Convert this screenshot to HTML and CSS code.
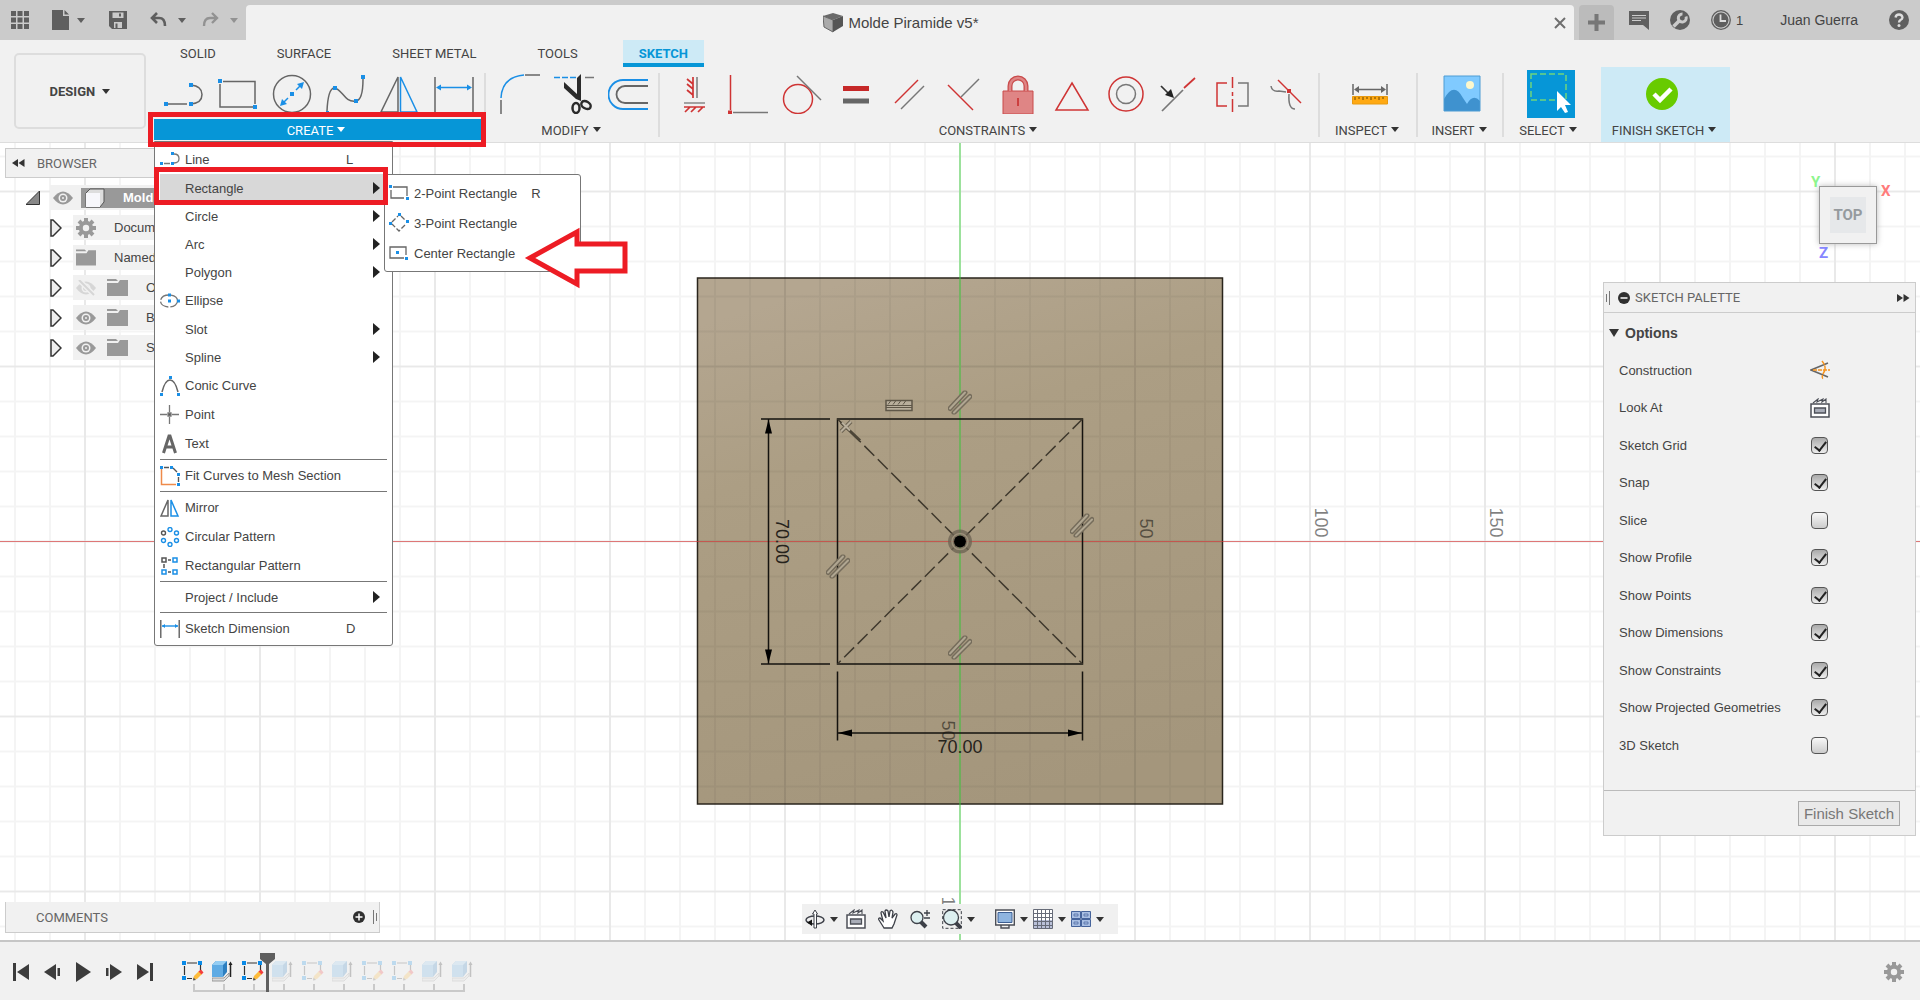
FILE: index.html
```html
<!DOCTYPE html>
<html lang="en">
<head>
  <meta charset="UTF-8" />
  <title>Molde Piramide v5*</title>
  <link rel="stylesheet" href="styles.css">
</head>
<body>
  <!-- shared icons -->
  <svg class="defs" width="0" height="0">
    <symbol id="eye" viewBox="0 0 20 14">
      <path d="M0 7Q10-6 20 7Q10 20 0 7Z" fill="#999"/>
      <circle cx="10" cy="7" r="4.5" fill="#f1f1f1"/><circle cx="10" cy="7" r="3" fill="#999"/><circle cx="10" cy="7" r="1" fill="#f1f1f1"/>
    </symbol>
    <symbol id="folder" viewBox="0 0 21 17">
      <path d="M0 0H9L11 2H0ZM0 4H11L13 1H21V17H0Z" fill="#999"/>
    </symbol>
    <symbol id="gear" viewBox="0 0 20 20">
      <circle cx="10" cy="10" r="5.2" fill="none" stroke="#999" stroke-width="4"/>
      <path d="M10 0V4M10 16V20M0 10H4M16 10H20M3 3L5.8 5.8M14.2 14.2L17 17M3 17L5.8 14.2M14.2 5.8L17 3" stroke="#999" stroke-width="4"/>
    </symbol>
    <symbol id="expand" viewBox="0 0 12 18">
      <path d="M1 1H3L11 9L3 17H1Z" fill="#eee" stroke="#333" stroke-width="1.5"/>
    </symbol>
    <symbol id="look" viewBox="0 0 20 20">
      <path d="M1 6H19V19H1Z" fill="#fff" stroke="#4c4f57" stroke-width="1.500"/>
      <path d="M4.500 10H15.500V15H4.500Z" fill="#a9adb8" stroke="#4c4f57" stroke-width="1.300"/>
      <path d="M3 5L8 1L7 4L13 1L12 4L16 1V5" fill="none" stroke="#4c4f57" stroke-width="1.100"/>
    </symbol>
    <symbol id="t-sketch" viewBox="0 0 22 22">
      <path d="M5 3H15M2.500 6V15M18.500 5V11M5 18.500H10" stroke="#333" stroke-width="1.200"/>
      <path d="M0 1H4V5H0ZM16 1H20V5H16ZM0 16H4V20H0Z" fill="#0a8ae6"/>
      <path d="M11 20L12 16L17 11L20 14L15 19Z" fill="#fdbb3b"/>
      <path d="M11 20.500L11.500 17.500L14 20Z" fill="#555"/>
      <path d="M16.500 11.500L19 9.500L21.500 12.500L19.500 14.500Z" fill="#f33d3d"/>
    </symbol>
    <symbol id="t-extrude" viewBox="0 0 22 22">
      <path d="M0 18V21H12L17 16V13L12 18Z" fill="#ddd" stroke="#888" stroke-width=".8"/>
      <path d="M0 5L4 1H15V12L11 17H0Z" fill="#2d7fc0"/>
      <path d="M0 5H11V17H0Z" fill="#5fabe4"/><path d="M0 5L4 1H15L11 5Z" fill="#94cdf3"/>
      <path d="M18.500 17V5" stroke="#222" stroke-width="1.500"/><path d="M16.500 5L18.500 1.500L20.500 5Z" fill="#222"/>
    </symbol>
    <symbol id="par" viewBox="-12 -12 24 24">
      <path d="M-10 6L5-10M-6 10L10-6" stroke="#756c5b" stroke-width="5" stroke-linecap="round"/>
      <path d="M-10 6L5-10M-6 10L10-6" stroke="#b0a691" stroke-width="2" stroke-linecap="round"/>
    </symbol>
  </svg>

  <header>
    <div class="topbar">
      <div class="quick">
        <button class="bare" aria-label="Data panel"><svg width="18" height="18" viewBox="0 0 18 18" fill="#5f5f5f"><path d="M0 0H5V5H0ZM6.500 0H11.500V5H6.500ZM13 0H18V5H13ZM0 6.500H5V11.500H0ZM6.500 6.500H11.500V11.500H6.500ZM13 6.500H18V11.500H13ZM0 13H5V18H0ZM6.500 13H11.500V18H6.500ZM13 13H18V18H13Z"/></svg></button>
        <button class="bare file" aria-label="File"><svg width="17" height="20" viewBox="0 0 17 20" fill="#5f5f5f"><path d="M0 0H11V6H17V20H0ZM12.500 0L17 4.500H12.500Z"/></svg><i class="caret"></i></button>
        <button class="bare save" aria-label="Save"><svg width="18" height="18" viewBox="0 0 18 18"><path d="M0 0H18V18H3L0 15Z" fill="#5f5f5f"/><path d="M3.500 1.500H14.500V7H3.500ZM5 11H13V17H5Z" fill="#cbcbcb"/><path d="M10 2.500H12V5.500H10ZM6.500 12.500H8.500V17H6.500Z" fill="#5f5f5f"/></svg></button>
        <button class="bare undo" aria-label="Undo"><svg width="17" height="16" viewBox="0 0 17 16" fill="none" stroke="#5f5f5f" stroke-width="2.600"><path d="M7 1L2 6L7 11M2 6H9Q15 6 15 14"/></svg><i class="caret"></i></button>
        <button class="bare redo" aria-label="Redo"><svg width="17" height="16" viewBox="0 0 17 16" fill="none" stroke="#929292" stroke-width="2.400"><path d="M10 1L15 6L10 11M15 6H8Q2 6 2 14"/></svg><i class="caret"></i></button>
      </div>
      <div class="doc-tab">
        <svg width="20" height="20" viewBox="0 0 20 20"><path d="M0 3L10 0L20 3L10 7Z" fill="#6a6a6a"/><path d="M0 3L10 7V19L1 14Z" fill="#aaa" stroke="#666"/><path d="M10 7L20 3V13L10 19Z" fill="#555"/></svg>
        <span>Molde Piramide v5*</span>
        <button class="bare close" aria-label="Close"><svg width="12" height="12" viewBox="0 0 12 12" stroke="#6f6f6f" stroke-width="2"><path d="M1 1L11 11M11 1L1 11"/></svg></button>
      </div>
      <button class="new-tab" aria-label="New tab"><svg width="17" height="17" viewBox="0 0 17 17" stroke="#777" stroke-width="4"><path d="M8.500 0V17M0 8.500H17"/></svg></button>
      <div class="account">
        <button class="bare" aria-label="Comments"><svg width="20" height="19" viewBox="0 0 20 19"><path d="M0 0H20V19L14 14H0Z" fill="#5f5f5f"/><path d="M3 4.500H17M3 7H17M3 9.500H12" stroke="#ccc" stroke-width="1.200"/></svg></button>
        <button class="bare" aria-label="Extensions"><svg width="20" height="20" viewBox="0 0 20 20"><circle cx="10" cy="10" r="10" fill="#5f5f5f"/><path d="M3.500 16.500L10 10" stroke="#cbcbcb" stroke-width="3.500"/><path d="M16 6.500A4 4 0 1 1 12.500 4" fill="none" stroke="#cbcbcb" stroke-width="3"/></svg></button>
        <button class="bare jobs"><svg width="20" height="20" viewBox="0 0 20 20"><circle cx="10" cy="10" r="9.300" fill="none" stroke="#5f5f5f" stroke-width="1.300"/><circle cx="10" cy="10" r="7.500" fill="#5f5f5f"/><path d="M9.500 4.500V11H15" fill="none" stroke="#ddd" stroke-width="1.800"/></svg>1</button>
        <button class="bare user">Juan Guerra</button>
        <button class="bare" aria-label="Help"><svg width="20" height="20" viewBox="0 0 20 20"><circle cx="10" cy="10" r="10" fill="#5f5f5f"/><path d="M6.500 7.500Q7 4.500 10 4.500T13.500 7.500Q13.500 9 11.500 10Q10 11 10 12.500" fill="none" stroke="#ddd" stroke-width="2.300"/><circle cx="10" cy="15.500" r="1.500" fill="#ddd"/></svg></button>
      </div>
    </div>

    <div class="ribbon">
      <button class="workspace">DESIGN <i class="caret"></i></button>
      <div class="ribbon-main">
        <nav class="tabs">
          <button>SOLID</button>
          <button>SURFACE</button>
          <button>SHEET METAL</button>
          <button>TOOLS</button>
          <button class="active">SKETCH</button>
        </nav>
        <div class="tools">
          <div class="group create">
            <div class="icons">
              <button aria-label="Line"><svg width="40" height="40" viewBox="0 0 40 40" fill="none"><path d="M3 30H23M27 30Q38 29 38 20.500T27 11" stroke="#666" stroke-width="1.500"/><path d="M0 28H4V32H0ZM25 28H29V32H25ZM25 9H29V13H25Z" fill="#1a8fe6"/></svg></button>
              <button aria-label="Rectangle"><svg width="40" height="40" viewBox="0 0 40 40" fill="none"><path d="M5 7.500H37V30M35 33H2V10" stroke="#666" stroke-width="1.500"/><path d="M0 5H4V9H0ZM35 31H39V35H35Z" fill="#1a8fe6"/></svg></button>
              <button aria-label="Circle"><svg width="40" height="40" viewBox="0 0 40 40" fill="none"><circle cx="20" cy="20" r="18.500" stroke="#666" stroke-width="1.500"/><path d="M12 28L16 24M24 16L28 12" stroke="#1a8fe6" stroke-width="1.500"/><path d="M8 32L10 25L15 30ZM32 8L30 15L25 10ZM18 18H22V22H18Z" fill="#1a8fe6"/></svg></button>
              <button aria-label="Spline"><svg width="40" height="40" viewBox="0 0 40 40" fill="none"><path d="M1 37Q2 15 8 14C16 14 18 29 30 27Q37 26 37 5" stroke="#666" stroke-width="1.500"/><path d="M-1 37H3V41H-1ZM7 12H11V16H7ZM28 25H32V29H28ZM35 1H39V5H35Z" fill="#1a8fe6"/></svg></button>
              <button aria-label="Mirror"><svg width="40" height="40" viewBox="0 0 40 40" fill="none"><path d="M18 3V38H1Z" stroke="#666" stroke-width="1.500"/><path d="M20.500 3V38H37Z" stroke="#1a8fe6" stroke-width="1.500"/></svg></button>
              <button aria-label="Sketch Dimension"><svg width="40" height="40" viewBox="0 0 40 40" fill="none"><path d="M1 3V38M39 3V38" stroke="#666" stroke-width="1.500"/><path d="M4 13.500H36" stroke="#1a8fe6" stroke-width="1.500"/><path d="M2 13.500L7 10.500V16.500ZM38 13.500L33 10.500V16.500Z" fill="#1a8fe6"/></svg></button>
            </div>
            <button class="group-label">CREATE <i class="caret"></i></button>
            <div class="callout callout-create"></div>

            <ul class="menu">
              <li><button><svg width="20" height="20" viewBox="0 0 20 20" fill="none"><path d="M4 13.500H10M14 4Q19 4 19 8.500T14 13" stroke="#777" stroke-width="1.300"/><path d="M0 12H3V15H0ZM11 12H14V15H11ZM11 2H14V5H11Z" fill="#1a8fe6"/></svg><span>Line</span><kbd>L</kbd></button></li>
              <li class="open"><button class="plain"><span>Rectangle</span><i class="more"></i></button>
                <ul class="submenu">
                  <li><button><svg width="20" height="20" viewBox="0 0 20 20" fill="none"><path d="M4 4H18V13M15 15H2V7" stroke="#666" stroke-width="1.300"/><path d="M0 2H3V5H0ZM17 14H20V17H17Z" fill="#1a8fe6"/></svg><span>2-Point Rectangle</span><kbd>R</kbd></button></li>
                  <li><button><svg width="20" height="20" viewBox="0 0 20 20" fill="none"><path d="M3 9L9 3M12 3L17 8M16 12L10 18L3 11" stroke="#666" stroke-width="1.300" stroke-dasharray="5 2"/><path d="M0 9H3V12H0ZM9 0H12V3H9ZM17 7H20V10H17Z" fill="#1a8fe6"/></svg><span>3-Point Rectangle</span></button></li>
                  <li><button><svg width="20" height="20" viewBox="0 0 20 20" fill="none"><path d="M17 12V4H1V15H15" stroke="#666" stroke-width="1.300"/><path d="M7 8H10V11H7ZM16 14H19V17H16Z" fill="#1a8fe6"/></svg><span>Center Rectangle</span></button></li>
                </ul>
                <div class="callout callout-item"></div>
                <svg class="arrow" width="104" height="62" viewBox="0 0 104 62"><path d="M6 31L53 5V17H101V44H53V57Z" fill="#fff" stroke="#ed1c24" stroke-width="5"/></svg>
              </li>
              <li><button class="plain"><span>Circle</span><i class="more"></i></button></li>
              <li><button class="plain"><span>Arc</span><i class="more"></i></button></li>
              <li><button class="plain"><span>Polygon</span><i class="more"></i></button></li>
              <li><button><svg width="20" height="20" viewBox="0 0 20 20" fill="none"><ellipse cx="9" cy="10" rx="8.500" ry="6" stroke="#777" stroke-width="1.300" stroke-dasharray="10 2"/><path d="M8 2.500H11V5.500H8ZM8 8.500H11V11.500H8ZM17 8.500H20V11.500H17Z" fill="#1a8fe6"/></svg><span>Ellipse</span></button></li>
              <li><button class="plain"><span>Slot</span><i class="more"></i></button></li>
              <li><button class="plain"><span>Spline</span><i class="more"></i></button></li>
              <li><button><svg width="20" height="20" viewBox="0 0 20 20" fill="none"><path d="M2 16Q5 4 10 4T18 16" stroke="#666" stroke-width="1.500"/><path d="M9 0H12V3H9ZM0 17H3V20H0ZM17 17H20V20H17Z" fill="#1a8fe6"/></svg><span>Conic Curve</span></button></li>
              <li><button><svg width="20" height="20" viewBox="0 0 20 20" stroke="#777" stroke-width="1.300"><path d="M9.500 0V7M9.500 12V19M0 9.500H7M12 9.500H19"/><path d="M8 8H11V11H8Z" fill="#555"/></svg><span>Point</span></button></li>
              <li><button><svg width="20" height="20" viewBox="0 0 20 20" fill="none" stroke="#666" stroke-width="3"><path d="M3.500 19L9 2H10L15.500 19M6 13H13"/></svg><span>Text</span></button></li>
              <li class="sep"></li>
              <li><button><svg width="20" height="20" viewBox="0 0 20 20" fill="none"><path d="M1.500 3V18.500H16" stroke="#ee8a4a" stroke-width="1.500"/><path d="M4 1.500H9M13 2L17 6M18.500 11V16" stroke="#555" stroke-width="1.400"/><path d="M0 0H3V3H0ZM10 0H13V3H10ZM17 7H20V10H17ZM17 17H20V20H17Z" fill="#1a8fe6"/></svg><span>Fit Curves to Mesh Section</span></button></li>
              <li class="sep"></li>
              <li><button><svg width="20" height="20" viewBox="0 0 20 20" fill="none" stroke-width="1.500"><path d="M8 2V18H1Z" stroke="#666"/><path d="M11 2V18H18Z" stroke="#1a8fe6"/></svg><span>Mirror</span></button></li>
              <li><button><svg width="20" height="20" viewBox="0 0 20 20" fill="none" stroke="#1a8fe6" stroke-width="1.400"><circle cx="10" cy="2.500" r="2"/><circle cx="16.500" cy="6" r="2"/><circle cx="16.500" cy="13.500" r="2"/><circle cx="10" cy="17.500" r="2"/><circle cx="3.500" cy="13.500" r="2"/><circle cx="3.500" cy="6" r="2" stroke="#555"/></svg><span>Circular Pattern</span></button></li>
              <li><button><svg width="20" height="20" viewBox="0 0 20 20" fill="none" stroke="#1a8fe6" stroke-width="1.500"><path d="M13 2H17V6H13ZM13 14H17V18H13ZM2 14H6V18H2Z"/><path d="M2 2H6V6H2ZM8 4H11M4 8V12M8 16H11" stroke="#555"/></svg><span>Rectangular Pattern</span></button></li>
              <li class="sep"></li>
              <li><button class="plain"><span>Project / Include</span><i class="more"></i></button></li>
              <li class="sep"></li>
              <li><button><svg width="20" height="20" viewBox="0 0 20 20" fill="none"><path d="M.8 1V19M19.200 1V19" stroke="#555" stroke-width="1.300"/><path d="M2 7H18" stroke="#1a8fe6" stroke-width="1.400"/><path d="M2 7L5 5V9ZM18 7L15 5V9Z" fill="#1a8fe6"/></svg><span>Sketch Dimension</span><kbd>D</kbd></button></li>
            </ul>
          </div>
          <div class="divider"></div>
          <div class="group">
            <div class="icons">
              <button aria-label="Fillet"><svg width="40" height="40" viewBox="0 0 40 40" fill="none" stroke-width="1.500"><path d="M1 24Q2 3 24 1" stroke="#1a8fe6"/><path d="M25 1H40M1 26V40" stroke="#666"/></svg></button>
              <button aria-label="Trim"><svg width="40" height="40" viewBox="0 0 40 40" fill="none"><path d="M0 3.500H22" stroke="#1a8fe6" stroke-width="1.500" stroke-dasharray="6 2"/><path d="M31 3.500H40" stroke="#777" stroke-width="1.500"/><path d="M23 4L27 0V27L22 25L10 14V8L23 20Z" fill="#2b2b2b"/><ellipse cx="22" cy="34" rx="3.500" ry="5" stroke="#2b2b2b" stroke-width="2.500"/><ellipse cx="32" cy="31" rx="5" ry="3.500" stroke="#2b2b2b" stroke-width="2.500" transform="rotate(30 32 31)"/></svg></button>
              <button aria-label="Offset"><svg width="40" height="40" viewBox="0 0 40 40" fill="none"><path d="M40 6H15A14.500 14.500 0 0 0 15 35H40" stroke="#1a8fe6" stroke-width="1.800"/><path d="M40 12H17A8.500 8.500 0 0 0 17 29H40" stroke="#666" stroke-width="1.800"/></svg></button>
            </div>
            <button class="group-label">MODIFY <i class="caret"></i></button>
          </div>
          <div class="divider"></div>
          <div class="group">
            <div class="icons">
              <button aria-label="Horizontal/Vertical"><svg width="40" height="40" viewBox="0 0 40 40" fill="none" stroke-width="1.700"><path d="M19 3V24M13 5L19 10M13 10L19 15M13 16L19 21M10 33H31M11 38L16 33M17 38L22 33M24 38L29 33" stroke="#cf3434"/><path d="M23 3V24M10 29H31" stroke="#888"/></svg></button>
              <button aria-label="Coincident"><svg width="40" height="40" viewBox="0 0 40 40" fill="none" stroke-width="1.500"><path d="M2.500 1V36" stroke="#cf3434"/><path d="M5 38.500H40" stroke="#777"/><path d="M0 36.500H4V40.500H0Z" fill="#cf3434"/></svg></button>
              <button aria-label="Tangent"><svg width="40" height="40" viewBox="0 0 40 40" fill="none" stroke-width="1.500"><circle cx="16" cy="25" r="14.500" stroke="#cf3434"/><path d="M15 2L39 26" stroke="#777"/></svg></button>
              <button aria-label="Equal"><svg width="40" height="40" viewBox="0 0 40 40"><path d="M7 12H33V17H7Z" fill="#c62828"/><path d="M7 24.500H33V29.500H7Z" fill="#666"/></svg></button>
              <button aria-label="Parallel"><svg width="40" height="40" viewBox="0 0 40 40" stroke-width="1.500"><path d="M5 29L28 6" stroke="#cf3434"/><path d="M11 35L34 12" stroke="#777"/></svg></button>
              <button aria-label="Perpendicular"><svg width="40" height="40" viewBox="0 0 40 40" stroke-width="1.500"><path d="M4 11L29 36" stroke="#cf3434"/><path d="M17 23L35 5" stroke="#777"/></svg></button>
              <button aria-label="Fix"><svg width="40" height="40" viewBox="0 0 40 40"><path d="M5 17H35V40H5Z" fill="#df8585" stroke="#c94b4b"/><path d="M12 17V12A8 8 0 0 1 28 12V17" fill="none" stroke="#c94b4b" stroke-width="5"/><path d="M12 17V12A8 8 0 0 1 28 12V17" fill="none" stroke="#df8585" stroke-width="2.500"/><path d="M20 24V32" stroke="#c62828" stroke-width="1.500"/></svg></button>
              <button aria-label="Midpoint"><svg width="40" height="40" viewBox="0 0 40 40" fill="none"><path d="M20 9L36 36H4Z" stroke="#cf3434" stroke-width="1.500"/></svg></button>
              <button aria-label="Concentric"><svg width="40" height="40" viewBox="0 0 40 40" fill="none" stroke-width="1.500"><circle cx="20" cy="20" r="17" stroke="#cf3434"/><circle cx="20" cy="20" r="9.500" stroke="#777"/></svg></button>
              <button aria-label="Collinear"><svg width="40" height="40" viewBox="0 0 40 40" stroke-width="1.700"><path d="M2 37L23 16" stroke="#777"/><path d="M24 14L35 4" stroke="#cf3434"/><path d="M1 12L10 21" stroke="#333"/><path d="M5 21L14 24L11 15Z" fill="#222"/></svg></button>
              <button aria-label="Symmetry"><svg width="40" height="40" viewBox="0 0 40 40" fill="none" stroke-width="1.500"><path d="M13 9H3V32H13M18.500 3V14M18.500 18V22M18.500 25V38" stroke="#cf3434"/><path d="M24 9H34V32H24" stroke="#777"/></svg></button>
              <button aria-label="Curvature"><svg width="40" height="40" viewBox="0 0 40 40" fill="none" stroke-width="1.500"><path d="M3 12Q4 18 11 17L18 18M21 20Q20 35 27 35" stroke="#777"/><path d="M10 6L33 29" stroke="#cf3434"/><path d="M19 15H23V19H19Z" fill="#cf3434"/></svg></button>
            </div>
            <button class="group-label">CONSTRAINTS <i class="caret"></i></button>
          </div>
          <div class="divider"></div>
          <div class="group inspect">
            <div class="icons"><button aria-label="Measure"><svg width="40" height="40" viewBox="0 0 40 40"><path d="M3 10V21M37 10V21M6 15.500H34" stroke="#666" stroke-width="1.500"/><path d="M4 15.500L9 12V19ZM36 15.500L31 12V19Z" fill="#666"/><path d="M2.500 22.500H37.500V30H2.500Z" fill="#ffa912" stroke="#e89a10"/><path d="M5 23V26M9 23V25M13 23V26M17 23V25M21 23V26M25 23V25M29 23V26M33 23V25" stroke="#6b4700"/></svg></button></div>
            <button class="group-label">INSPECT <i class="caret"></i></button>
          </div>
          <div class="divider"></div>
          <div class="group insert">
            <div class="icons"><button aria-label="Insert image"><svg width="40" height="40" viewBox="0 0 40 40"><path d="M2 2H38V37H2Z" fill="#80caff"/><path d="M2 25Q12 7 21 24L25 30Q31 19 38 27V37H2Z" fill="#3f92cf"/><circle cx="28" cy="11" r="4" fill="#fdf8cc"/><path d="M2 2H38V37H2Z" fill="none" stroke="#4c9cd4"/></svg></button></div>
            <button class="group-label">INSERT <i class="caret"></i></button>
          </div>
          <div class="divider"></div>
          <div class="group select">
            <div class="icons"><button aria-label="Select"><svg width="48" height="48" viewBox="0 0 48 48"><path d="M0 0H48V48H0Z" fill="#0696d7"/><path d="M4 4H39V30H4Z" fill="none" stroke="#6fd57d" stroke-width="1.500" stroke-dasharray="6 3"/><path d="M30 21V41L34 37L38 43L41 42L38 35L44 35Z" fill="#fff"/></svg></button></div>
            <button class="group-label">SELECT <i class="caret"></i></button>
          </div>
          <button class="finish">
            <svg width="32" height="32" viewBox="0 0 32 32"><circle cx="16" cy="16" r="16" fill="#68cb00"/><path d="M8 16L14 22L25 11" fill="none" stroke="#fff" stroke-width="4.500"/></svg>
            <span class="group-label">FINISH SKETCH <i class="caret"></i></span>
          </button>
        </div>
      </div>
    </div>
  </header>

  <main>
    <svg class="stage" width="100%" height="100%">
      <defs>
        <pattern id="minor" width="35" height="35" patternUnits="userSpaceOnUse"><path d="M0 0H35V35H0Z" fill="none" stroke="#000" stroke-opacity=".045" stroke-width="2"/></pattern>
        <pattern id="major" width="175" height="175" patternUnits="userSpaceOnUse"><path d="M0 0H175V175H0Z" fill="none" stroke="#000" stroke-opacity=".045" stroke-width="2"/></pattern>
        <linearGradient id="wood" x1=".3" y1="0" x2=".6" y2="1"><stop offset="0" stop-color="#b4a690"/><stop offset=".3" stop-color="#ac9e84"/><stop offset="1" stop-color="#a4967c"/></linearGradient>
      </defs>
      <!-- origin of the sketch is the middle of the canvas -->
      <svg x="50%" y="50%" overflow="visible">
        <rect x="-262.500" y="-263.500" width="525" height="526" fill="url(#wood)" stroke="#2a251c" stroke-width="1.500"/>
        <rect x="-2100" y="-2100" width="4200" height="4200" fill="url(#minor)"/>
        <rect x="-2100" y="-2100" width="4200" height="4200" fill="url(#major)"/>
        <path d="M-2100 0H2100" stroke="#d93a3a" stroke-opacity=".65" stroke-width="1"/>
        <path d="M0-2100V2100" stroke="#3fd63f" stroke-opacity=".45" stroke-width="2"/>
        <g class="axis-text">
          <text transform="translate(180 -13) rotate(90)">50</text>
          <text transform="translate(355 -19) rotate(90)">100</text>
          <text transform="translate(530 -19) rotate(90)">150</text>
          <text transform="translate(-18 189) rotate(90)">50</text>
          <text transform="translate(-18 370) rotate(90)">100</text>
        </g>
        <g fill="none" stroke="#15130f" stroke-width="1.500">
          <path d="M-122.500-122.500H122.500V122.500H-122.500Z"/>
          <path d="M-122.500-122.500L122.500 122.500M122.500-122.500L-122.500 122.500" stroke="#3f392d" stroke-dasharray="14 5"/>
          <path d="M-199-122.500H-130M-199 122.500H-130M-191.500-122V122M-122.500 130V199M122.500 130V199M-122 191.500H122"/>
        </g>
        <path d="M-191.500-122L-195-108H-188ZM-191.500 122L-195 108H-188ZM-122 191.500L-108 188V195ZM122 191.500L108 188V195Z" fill="#000"/>
        <g class="dim-text">
          <text transform="translate(-184 0) rotate(90)">70.00</text>
          <text x="0" y="211">70.00</text>
        </g>
        <use href="#par" x="-12" y="-151" width="24" height="24"/>
        <use href="#par" x="-12" y="94" width="24" height="24"/>
        <use href="#par" x="110" y="-28" width="24" height="24"/>
        <use href="#par" x="-134" y="13" width="24" height="24"/>
        <path d="M-74-141H-48V-131H-74Z" fill="#b9af9c" stroke="#5f5748" stroke-width="1.500"/>
        <path d="M-74-136H-48M-74-134H-48M-72-137L-69-141M-67-137L-64-141M-62-137L-59-141M-57-137L-54-141" stroke="#5f5748"/>
        <path d="M-119-119L-100-101" stroke="#4d4638" stroke-width="3"/>
        <path d="M-119-110L-109-120" stroke="#6b6252" stroke-width="4"/><path d="M-119-110L-109-120M-118-119L-110-111" stroke="#b9af9c" stroke-width="2"/>
        <circle r="9" fill="none" stroke="#6b6252" stroke-opacity=".75" stroke-width="6"/><circle r="8" fill="none" stroke="#9c907a" stroke-width="1.500"/>
        <circle r="6" fill="#000"/>
      </svg>
    </svg>

    <aside class="browser">
      <h2><svg width="13" height="8" viewBox="0 0 13 8" fill="#333"><path d="M6 0V8L0 4ZM12.500 0V8L6.500 4Z"/></svg>BROWSER</h2>
      <ul>
        <li class="root"><svg width="14" height="14" viewBox="0 0 14 14"><path d="M13.500 0V13.500H0Z" fill="#888" stroke="#333"/></svg>
          <div class="node"><svg width="20" height="14"><use href="#eye"/></svg><div class="chip"><svg width="20" height="20" viewBox="0 0 20 20" stroke="#555"><path d="M1 5L5 1H19V14L15 19H1Z" fill="#ddd"/><path d="M1 5H15V19H1Z" fill="#f7f7fb" stroke="none"/></svg><b>Mold</b></div></div></li>
        <li><svg width="12" height="18"><use href="#expand"/></svg><div class="node"><svg width="20" height="20"><use href="#gear"/></svg><span>Docum</span></div></li>
        <li><svg width="12" height="18"><use href="#expand"/></svg><div class="node"><svg width="20" height="17"><use href="#folder"/></svg><span>Named</span></div></li>
        <li><svg width="12" height="18"><use href="#expand"/></svg><div class="node deep"><svg class="off" width="20" height="16" viewBox="0 0 20 16"><use href="#eye" y="1" width="20" height="14"/><path d="M3 0L18 15" stroke="#f1f1f1" stroke-width="5"/><path d="M3 0L18 15" stroke="#999" stroke-width="2"/></svg><svg width="21" height="17"><use href="#folder"/></svg><span>O</span></div></li>
        <li><svg width="12" height="18"><use href="#expand"/></svg><div class="node deep"><svg width="20" height="14"><use href="#eye"/></svg><svg width="21" height="17"><use href="#folder"/></svg><span>B</span></div></li>
        <li><svg width="12" height="18"><use href="#expand"/></svg><div class="node deep"><svg width="20" height="14"><use href="#eye"/></svg><svg width="21" height="17"><use href="#folder"/></svg><span>S</span></div></li>
      </ul>
    </aside>

    <div class="viewcube">
      <span class="ax y">Y</span><span class="ax x">X</span><span class="ax z">Z</span>
      <button>TOP</button>
    </div>

    <aside class="palette">
      <h2><svg width="5" height="14" viewBox="0 0 5 14" stroke="#777"><path d="M1.500 3V11M4.500 0V14"/></svg><svg class="minus" width="12" height="12" viewBox="0 0 12 12"><circle cx="6" cy="6" r="6" fill="#2f2f2f"/><path d="M2.500 6H9.500" stroke="#fff" stroke-width="1.500"/></svg>SKETCH PALETTE<svg class="fwd" width="13" height="8" viewBox="0 0 13 8" fill="#333"><path d="M0 0V8L6 4ZM6.500 0V8L12.500 4Z"/></svg></h2>
      <h3><i class="caret"></i>Options</h3>
      <ul>
        <li><label for="construction">Construction</label><button id="construction" class="bare"><svg width="20" height="20" viewBox="0 0 20 20" fill="none" stroke-width="1.500"><path d="M18 3L1 10L18 17" stroke="#666"/><path d="M3 10H20M12 1Q17 7 14 12T13 19" stroke="#f7941e" stroke-dasharray="4 1"/></svg></button></li>
        <li><label for="lookat">Look At</label><button id="lookat" class="bare"><svg width="20" height="20"><use href="#look"/></svg></button></li>
        <li><label for="grid">Sketch Grid</label><input type="checkbox" id="grid" checked></li>
        <li><label for="snap">Snap</label><input type="checkbox" id="snap" checked></li>
        <li><label for="slice">Slice</label><input type="checkbox" id="slice"></li>
        <li><label for="profile">Show Profile</label><input type="checkbox" id="profile" checked></li>
        <li><label for="points">Show Points</label><input type="checkbox" id="points" checked></li>
        <li><label for="dimensions">Show Dimensions</label><input type="checkbox" id="dimensions" checked></li>
        <li><label for="constraints">Show Constraints</label><input type="checkbox" id="constraints" checked></li>
        <li><label for="projected">Show Projected Geometries</label><input type="checkbox" id="projected" checked></li>
        <li><label for="sketch3d">3D Sketch</label><input type="checkbox" id="sketch3d"></li>
      </ul>
      <footer><button>Finish Sketch</button></footer>
    </aside>

    <div class="comments">
      <span>COMMENTS</span>
      <button class="bare" aria-label="Add comment"><svg width="12" height="12" viewBox="0 0 12 12"><circle cx="6" cy="6" r="6" fill="#2f2f2f"/><path d="M2.500 6H9.500M6 2.500V9.500" stroke="#fff" stroke-width="1.500"/></svg></button>
      <svg width="5" height="14" viewBox="0 0 5 14" stroke="#777"><path d="M.5 0V14M3.500 3V11"/></svg>
    </div>

    <div class="navbar">
      <button class="bare drop" aria-label="Orbit"><svg width="20" height="20" viewBox="0 0 20 20" fill="none" stroke="#3d4048" stroke-width="1.500"><ellipse cx="10" cy="11" rx="9" ry="4"/><path d="M10 1L12.500 5H11.500V19H9V5H7.500Z" fill="#fff" stroke-width="1"/><path d="M2 13.500L7 10.500V17Z" fill="#111" stroke="none"/></svg><i class="caret"></i></button>
      <button class="bare" aria-label="Look At"><svg width="20" height="20"><use href="#look"/></svg></button>
      <button class="bare" aria-label="Pan"><svg width="20" height="20" viewBox="0 0 20 20"><path d="M6 19L1 11Q0 9 2 9L5 12L3 4Q3 2 5 3L8 9L7 2Q8 0 10 2L11 8L12 2Q14 0 15 3L14 9L17 5Q19 4 19 6L16 15L14 19Z" fill="#fff" stroke="#3d4048" stroke-width="1.300"/></svg></button>
      <button class="bare" aria-label="Zoom"><svg width="20" height="20" viewBox="0 0 20 20" stroke="#3d4048"><path d="M10 12L16 18" stroke-width="4"/><circle cx="7" cy="8.500" r="6" fill="#dceff0" stroke-width="1.300"/><path d="M14 4H20M17 1V7M14 9H20" stroke-width="1.300"/></svg></button>
      <button class="bare drop" aria-label="Fit"><svg width="20" height="20" viewBox="0 0 20 20" stroke="#3d4048"><path d="M.7.7H19.300V19.300H.7Z" fill="none" stroke-dasharray="3 2"/><path d="M13 13L19 19" stroke-width="4"/><circle cx="9" cy="8.500" r="7.500" fill="#dceff0" stroke-width="1.300"/></svg><i class="caret"></i></button>
      <button class="bare drop first" aria-label="Display"><svg width="20" height="20" viewBox="0 0 20 20"><path d="M.7 1H19.300V16H.7Z" fill="#fff" stroke="#4c4f57" stroke-width="1.400"/><path d="M3 3.500H17V13.500H3Z" fill="#8fb5e0" stroke="#3d5f93"/><path d="M6 16V19H14V16" fill="none" stroke="#4c4f57" stroke-width="1.400"/></svg><i class="caret"></i></button>
      <button class="bare drop" aria-label="Grid"><svg width="20" height="20" viewBox="0 0 20 20"><path d="M.5.5H19.500V19.500H.5Z" fill="#fff"/><path d="M.5 11H19.500V19.500H.5Z" fill="#b9c0d8"/><path d="M.5.5H19.500V19.500H.5ZM4.500 0V20M8.500 0V20M12.500 0V20M16.500 0V20M0 4.500H20M0 8.500H20M0 12.500H20M0 16.500H20" fill="none" stroke="#666b78"/></svg><i class="caret"></i></button>
      <button class="bare drop" aria-label="Viewports"><svg width="20" height="20" viewBox="0 0 20 20" fill="#a9bfe3" stroke="#45639b"><path d="M.5 2.500H9.500V9.500H.5ZM10.500 2.500H19.500V9.500H10.500ZM.5 10.500H9.500V17.500H.5ZM10.500 10.500H19.500V17.500H10.500Z"/><path d="M3 5H7V7H3ZM13 5H17V7H13ZM3 13H7V15H3ZM13 13H17V15H13Z" stroke-width=".7"/></svg><i class="caret"></i></button>
    </div>
  </main>

  <footer class="timeline">
    <div class="playback">
      <button class="bare" aria-label="Start"><svg width="16" height="18" viewBox="0 0 16 18" fill="#3c3c3c"><path d="M0 0H3V18H0ZM16 1V17L4 9Z"/></svg></button>
      <button class="bare" aria-label="Step back"><svg width="16" height="18" viewBox="0 0 16 18" fill="#3c3c3c"><path d="M12 1V17L0 9ZM13.500 5H16V13H13.500Z"/></svg></button>
      <button class="bare" aria-label="Play"><svg width="16" height="20" viewBox="0 0 16 20" fill="#3c3c3c"><path d="M1 0V20L16 10Z"/></svg></button>
      <button class="bare" aria-label="Step forward"><svg width="16" height="18" viewBox="0 0 16 18" fill="#3c3c3c"><path d="M4 1V17L16 9ZM0 5H2.500V13H0Z"/></svg></button>
      <button class="bare" aria-label="End"><svg width="16" height="18" viewBox="0 0 16 18" fill="#3c3c3c"><path d="M13 0H16V18H13ZM0 1V17L12 9Z"/></svg></button>
    </div>
    <ol class="features">
      <li><svg width="22" height="22"><use href="#t-sketch"/></svg></li>
      <li><svg width="22" height="22"><use href="#t-extrude"/></svg></li>
      <li class="current"><svg width="22" height="22"><use href="#t-sketch"/></svg><svg class="marker" width="15" height="39" viewBox="0 0 15 39"><path d="M0 0H15V6L9 11V39H6V11L0 6Z" fill="#5f5f5f"/></svg></li>
      <li class="later"><svg width="22" height="22"><use href="#t-extrude"/></svg></li>
      <li class="later"><svg width="22" height="22"><use href="#t-sketch"/></svg></li>
      <li class="later"><svg width="22" height="22"><use href="#t-extrude"/></svg></li>
      <li class="later"><svg width="22" height="22"><use href="#t-sketch"/></svg></li>
      <li class="later"><svg width="22" height="22"><use href="#t-sketch"/></svg></li>
      <li class="later"><svg width="22" height="22"><use href="#t-extrude"/></svg></li>
      <li class="later"><svg width="22" height="22"><use href="#t-extrude"/></svg></li>
    </ol>
    <button class="bare settings" aria-label="Settings"><svg width="20" height="20"><use href="#gear"/></svg></button>
  </footer>
</body>
</html>
```
FILE: styles.css
```css
* {
  box-sizing: border-box;
}
body {
  margin: 0;
  height: 100vh;
  display: flex;
  flex-direction: column;
  overflow: hidden;
  font-family: "Liberation Sans", Arial, sans-serif;
  font-size: 13px;
  color: #444;
  background: #fff;
}
ul, ol {
  list-style: none;
  margin: 0;
  padding: 0;
}
h2, h3 {
  margin: 0;
  font-size: 13px;
  font-weight: normal;
}
button {
  font: inherit;
  color: inherit;
  background: none;
  border: 0;
  padding: 0;
}
svg {
  display: block;
  flex: none;
}
.defs {
  position: absolute;
}
.bare {
  display: flex;
  align-items: center;
}
.caret {
  display: inline-block;
  border: 4px solid transparent;
  border-top: 5px solid #333;
  border-bottom: 0;
}

/* top bar */
header {
  position: relative;
  z-index: 2;
  background: #f1f1f1;
  border-bottom: 1px solid #ddd;
}
.topbar {
  display: flex;
  height: 40px;
  background: #cbcbcb;
}
.quick {
  display: flex;
  align-items: center;
  width: 246px;
  padding-left: 11px;
}
.quick .caret {
  border-top-color: #5f5f5f;
  margin-left: 8px;
}
.quick .file {
  margin-left: 23px;
}
.quick .save {
  margin-left: 24px;
}
.quick .undo {
  margin-left: 23px;
}
.quick .undo .caret,
.quick .redo .caret {
  margin-left: 11px;
}
.quick .redo {
  margin-left: 16px;
}
.quick .redo .caret {
  border-top-color: #929292;
}
.doc-tab {
  position: relative;
  flex: 1;
  display: flex;
  align-items: center;
  justify-content: center;
  gap: 5px;
  margin-top: 5px;
  padding-right: 18px;
  font-size: 15px;
  background: #f1f1f1;
  border-radius: 4px 4px 0 0;
}
.doc-tab .close {
  position: absolute;
  right: 8px;
}
.new-tab {
  display: flex;
  align-items: center;
  justify-content: center;
  width: 35px;
  margin: 5px 0 0 5px;
  background: #bbb;
  border-radius: 4px 4px 0 0;
}
.account {
  display: flex;
  align-items: center;
  gap: 21px;
  padding: 0 11px 0 15px;
}
.jobs {
  gap: 5px;
}
.user {
  margin: 0 10px 0 16px;
  font-size: 14px;
}

/* ribbon */
.ribbon {
  display: flex;
  font-family: Roboto, sans-serif;
}
.workspace {
  width: 132px;
  height: 76px;
  margin: 13px 4px 0 14px;
  border: 2px solid #ddd;
  border-radius: 5px;
  font-weight: bold;
}
.workspace .caret {
  margin: 0 0 2px 4px;
}
.ribbon-main {
  flex: 1;
}
.tabs {
  display: flex;
  gap: 29px;
  padding-left: 14px;
}
.tabs button {
  height: 27px;
  padding: 0 16px;
}
.tabs .active {
  color: #0696d7;
  font-weight: bold;
  background: #cdeaf6;
  box-shadow: inset 0 -4px #0696d7;
}
.tools {
  display: flex;
  height: 75px;
}
.group {
  position: relative;
  padding: 3px 3px 0 4px;
}
.icons {
  display: flex;
  justify-content: center;
  padding-left: 3px;
  margin-bottom: 1px;
}
.icons button {
  display: flex;
  align-items: center;
  justify-content: center;
  width: 54px;
  height: 48px;
}
.group-label {
  display: flex;
  align-items: center;
  justify-content: center;
  gap: 4px;
  width: 100%;
  height: 21px;
  padding: 2px 3px 0 0;
}
.group-label .caret {
  margin-bottom: 3px;
}
.create .group-label {
  color: #fff;
  background: #0696d7;
}
.create .caret {
  border-top-color: #fff;
}
.divider {
  width: 2px;
  margin: 6px 0 5px;
  background: #ddd;
}
.inspect {
  width: 96px;
}
.insert {
  width: 84px;
}
.select {
  width: 90px;
}
.finish {
  width: 129px;
  margin-left: 7px;
  padding-top: 9px;
  background: #cdeaf6;
}
.finish svg {
  margin: 0 auto 9px;
  position: relative;
  left: -4px;
}

/* create menu */
.menu {
  position: absolute;
  top: 74px;
  left: 4px;
  width: 239px;
  padding: 3px 5px 2px;
  background: #fff;
  border: 1px solid #777;
  border-radius: 0 0 3px 3px;
  font-family: "Liberation Sans", Arial, sans-serif;
}
.menu li button {
  display: flex;
  align-items: center;
  gap: 5px;
  width: 100%;
  height: 29px;
  text-align: left;
}
.menu li .plain {
  height: 28px;
  padding-left: 25px;
}
.menu span {
  flex: 1;
}
.menu kbd {
  width: 41px;
  font: inherit;
}
.more {
  margin-right: 7px;
  border: 6px solid transparent;
  border-left: 7px solid #222;
  border-right: 0;
}
.menu .sep {
  height: 1px;
  margin: 1px 0;
  background: #777;
}
.open {
  position: relative;
}
.open > button {
  background: #d8d8d8;
}
.submenu {
  position: absolute;
  top: 0;
  left: 224px;
  width: 197px;
  padding: 3px 4px;
  background: #fff;
  border: 1px solid #777;
  border-radius: 3px;
}
.menu .submenu button {
  height: 30px;
}
.submenu span {
  flex: none;
}
.submenu kbd {
  margin-left: 9px;
}

/* red marks */
.callout {
  position: absolute;
  border: 5px solid #ed1c24;
}
.callout-create {
  z-index: 1;
  top: 45px;
  left: -2px;
  width: 338px;
  height: 35px;
}
.callout-item {
  top: -7px;
  left: -6px;
  width: 234px;
  height: 38px;
}
.arrow {
  position: absolute;
  top: 53px;
  left: 364px;
}

/* canvas */
main {
  position: relative;
  flex: 1;
  min-height: 0;
}
.stage {
  position: absolute;
  top: 0;
  left: 0;
}
.axis-text, .dim-text {
  font-size: 18px;
  text-anchor: middle;
}
.axis-text {
  fill: #000;
  fill-opacity: 0.5;
}
.dim-text {
  fill: #26231c;
}

.browser {
  position: absolute;
  top: 5px;
  left: 5px;
  width: 150px;
  overflow: hidden;
}
.browser h2, .palette h2 {
  display: flex;
  align-items: center;
  height: 30px;
  font-family: Roboto, sans-serif;
  font-size: 13px;
  color: #666;
  background: #f1f1f1;
  border: 1px solid #ccc;
}
.browser h2 {
  gap: 12px;
  padding-left: 6px;
}
.browser ul {
  display: grid;
  gap: 5px;
  padding: 7px 0 0 45px;
}
.browser li {
  display: flex;
  align-items: center;
  gap: 11px;
}
.browser .root {
  margin-left: -24px;
  gap: 10px;
}
.node {
  flex: 1;
  display: flex;
  align-items: center;
  height: 25px;
  padding-left: 3px;
  gap: 18px;
  background: #f1f1f1;
}
.root .node {
  gap: 8px;
}
.deep svg + svg {
  margin-left: -7px;
}
.off {
  opacity: 0.3;
}
.chip {
  flex: 1;
  display: flex;
  align-items: center;
  gap: 18px;
  height: 20px;
  padding-left: 4px;
  color: #fff;
  background: #999;
}

.viewcube {
  position: absolute;
  top: 43px;
  right: 43px;
}
.viewcube button {
  width: 58px;
  height: 58px;
  font-family: Roboto, sans-serif;
  font-size: 15px;
  font-weight: bold;
  color: #959a9e;
  background: linear-gradient(#e6e8ea, #e6e8ea) center / 36px 36px no-repeat #f1f1f1;
  border: 1px solid #999;
  box-shadow: 0 0 6px #bbb;
}
.ax {
  position: absolute;
  font-family: Roboto, sans-serif;
  font-size: 15px;
  font-weight: bold;
}
.ax.x {
  top: -4px;
  left: 62px;
  color: #ff7b7b;
}
.ax.y {
  top: -13px;
  left: -8px;
  color: #8df58d;
}
.ax.z {
  top: 58px;
  left: 0;
  color: #8686ff;
}

.palette {
  position: absolute;
  top: 139px;
  right: 4px;
  width: 313px;
  background: #f1f1f1;
  border: 1px solid #ccc;
}
.palette h2 {
  border-width: 0 0 1px;
}
.palette .minus {
  margin: 0 5px 0 8px;
}
.palette h2 svg:first-child {
  margin-left: 1px;
}
.palette .fwd {
  margin-left: auto;
  margin-right: 5px;
}
.palette h3 {
  display: flex;
  align-items: center;
  gap: 6px;
  height: 38px;
  padding: 2px 0 0 5px;
  font-size: 14px;
  font-weight: bold;
}
.palette h3 .caret {
  border-width: 8px 5px 0;
}
.palette ul {
  padding: 0 85px 26px 15px;
}
.palette li {
  display: flex;
  align-items: center;
  justify-content: space-between;
  height: 37px;
}
.palette li:nth-child(odd) {
  height: 38px;
}
.palette input {
  appearance: none;
  position: relative;
  width: 17px;
  height: 17px;
  margin: 0 2px;
  background: linear-gradient(#f8f8f8, #ccc);
  border: 1px solid #555;
  border-radius: 4px;
}
.palette input:checked {
  background: linear-gradient(#aaa, #eee);
}
.palette input:checked::after {
  content: "";
  position: absolute;
  top: 1px;
  left: 5px;
  width: 5px;
  height: 10px;
  border: solid #222;
  border-width: 0 2px 2px 0;
  transform: rotate(38deg);
}
.palette footer {
  padding: 10px 15px 9px;
  text-align: right;
  border-top: 1px solid #bbb;
}
.palette footer button {
  height: 25px;
  padding: 0 5px;
  font-size: 15px;
  color: #777;
  background: #e9e9e9;
  border: 1px solid #aaa;
}

.comments {
  position: absolute;
  bottom: 7px;
  left: 5px;
  width: 375px;
  height: 31px;
  display: flex;
  align-items: center;
  gap: 8px;
  padding: 0 1px 0 30px;
  font-family: Roboto, sans-serif;
  color: #666;
  background: #f1f1f1;
  border: 1px solid #ccc;
  border-top: 0;
}
.comments span {
  flex: 1;
}

.navbar {
  position: absolute;
  bottom: 6px;
  left: 50%;
  transform: translateX(-50%);
  width: 316px;
  height: 30px;
  display: flex;
  align-items: center;
  gap: 12px;
  padding: 0 3px;
  background: #f0f0f0;
}
.navbar .drop {
  gap: 5px;
  margin-right: -4px;
}
.navbar .drop + .drop {
  margin-left: -3px;
}
.navbar .drop + .first {
  margin-left: 12px;
}

/* timeline */
.timeline {
  display: flex;
  height: 60px;
  padding: 0 16px 0 13px;
  background: #f1f1f1;
  border-top: 2px solid #c6c6c6;
}
.playback {
  display: flex;
  gap: 15px;
  height: 60px;
}
.features {
  display: flex;
  height: 50px;
  margin-left: 25px;
}
.features li {
  position: relative;
  width: 30px;
  padding: 18px 0 0 4px;
}
/* rail with a tick under each feature */
.features li::before,
.features li::after {
  content: "";
  position: absolute;
  background: #c9c9c9;
}
.features li::before {
  top: 42px;
  left: 15px;
  width: 2px;
  height: 8px;
}
.features li::after {
  top: 48px;
  left: 15px;
  width: 30px;
  height: 2px;
}
.features li:last-child::after {
  width: 2px;
}
.later svg {
  opacity: 0.22;
}
.marker {
  position: absolute;
  z-index: 1;
  top: 11px;
  left: 22px;
}
.settings {
  margin-left: auto;
  height: 60px;
}
```
